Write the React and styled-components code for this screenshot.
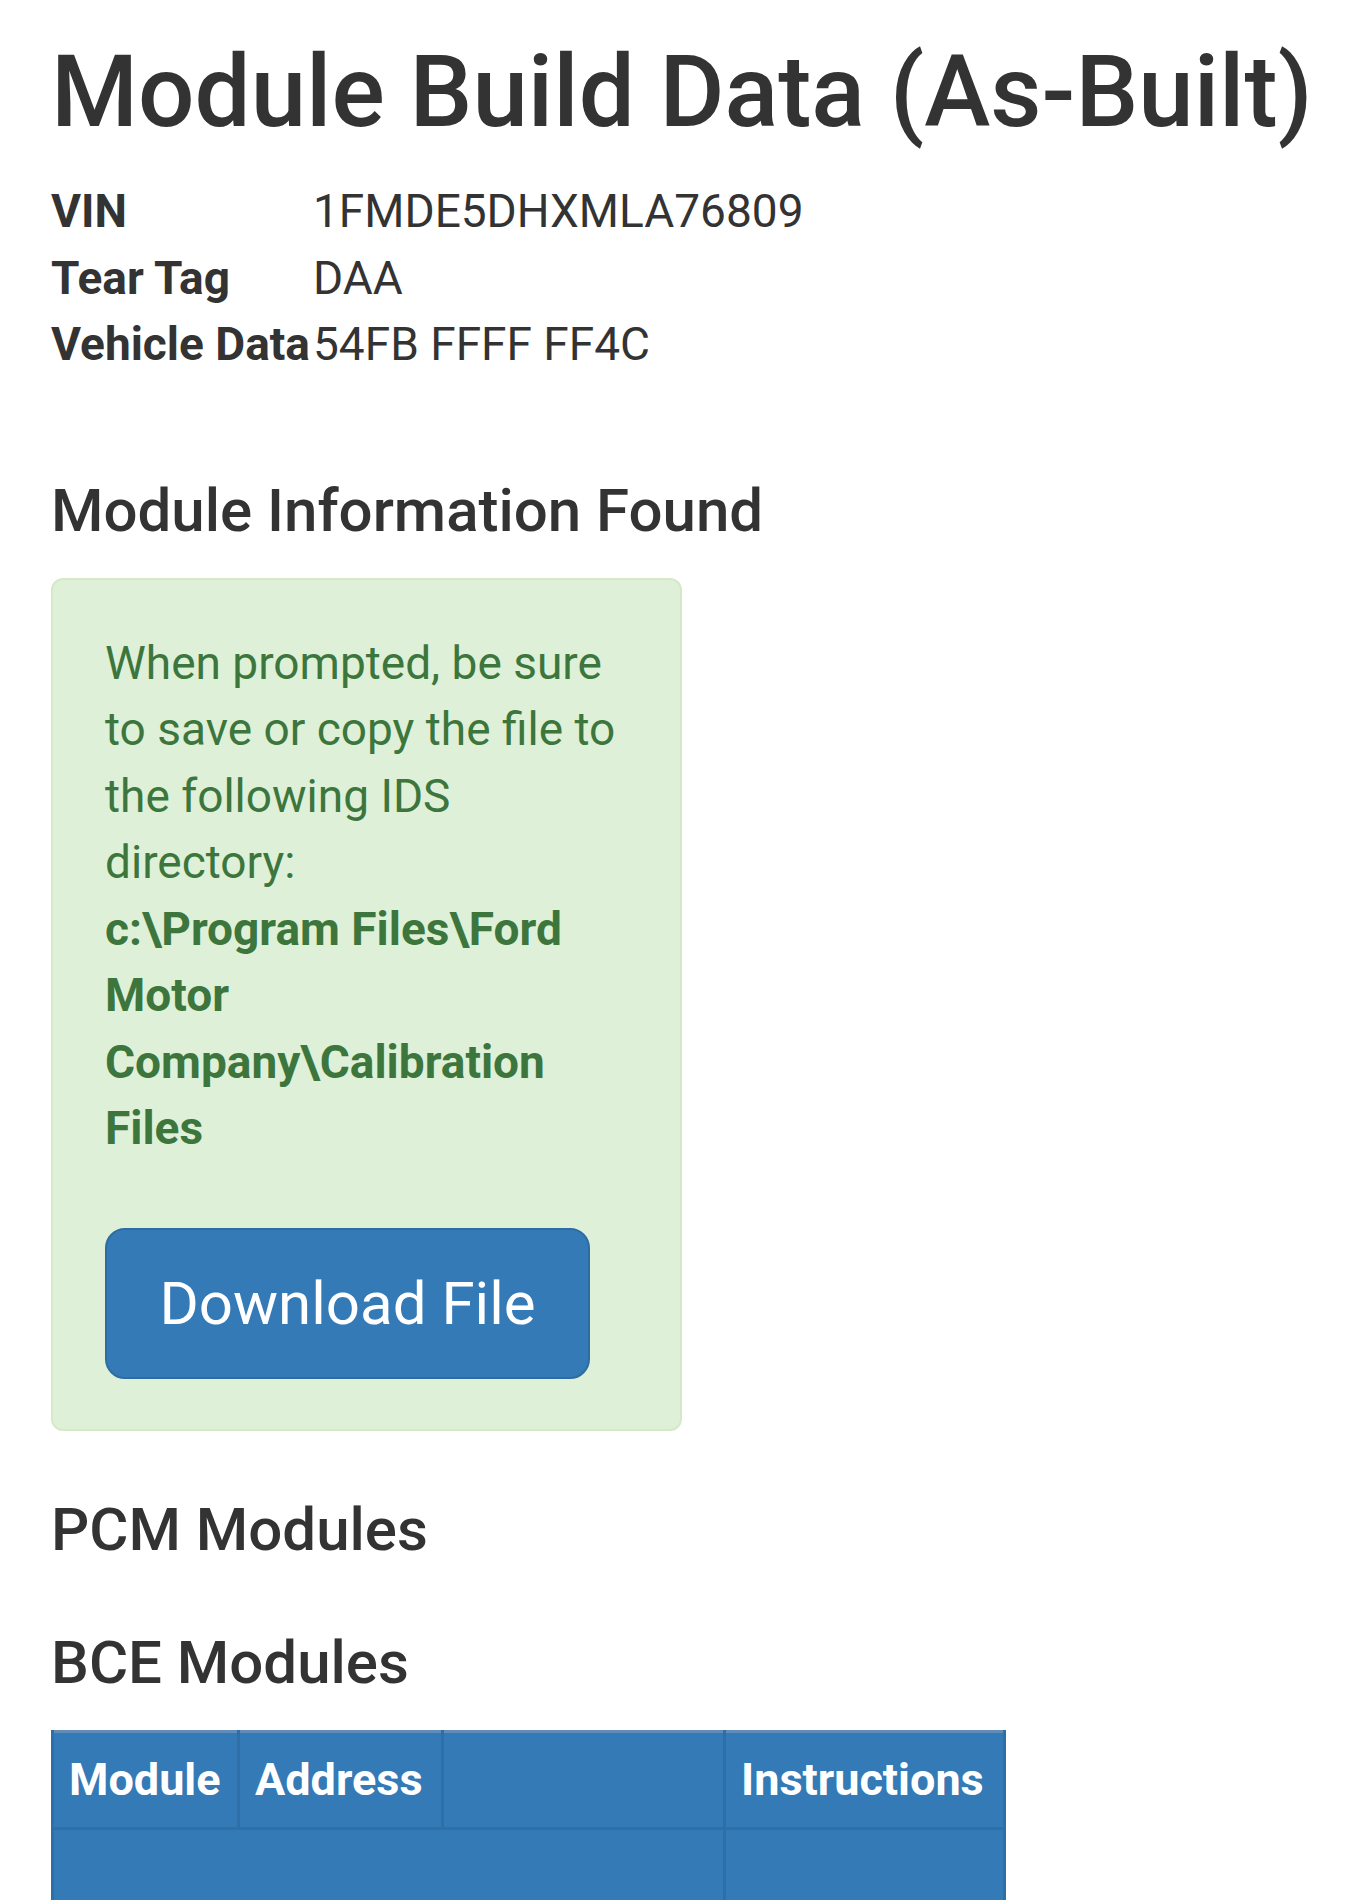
import React from "react";
import styled, { createGlobalStyle } from "styled-components";

const GlobalStyle = createGlobalStyle`
  html, body {
    margin: 0;
    padding: 0;
    background: #ffffff;
  }
  body {
    font-family: Roboto, "Noto Sans", "Liberation Sans", sans-serif;
    color: #333333;
    font-size: 46px;
    line-height: 66.5px;
  }
`;

const Page = styled.div`
  padding: 35px 51px 0 51px;
  width: 1364px;
  box-sizing: border-box;
`;

const Title = styled.h1`
  margin: 0;
  font-size: 99.6px;
  line-height: 114px;
  font-weight: 500;
  color: #333333;
  white-space: nowrap;
`;

const InfoList = styled.dl`
  display: grid;
  grid-template-columns: 262px 1fr;
  margin: 29px 0 0 0;
`;

const InfoLabel = styled.dt`
  font-weight: 700;
  white-space: nowrap;
`;

const InfoValue = styled.dd`
  margin: 0;
  white-space: nowrap;
`;

const SectionTitle = styled.h3`
  margin: ${(p) => p.$top}px 0 0 0;
  font-size: 60px;
  line-height: 66px;
  font-weight: 500;
  color: #333333;
`;

const Alert = styled.div`
  margin-top: 34px;
  width: 631px;
  box-sizing: border-box;
  padding: 50px 52px;
  background: #dff0d8;
  border: 2px solid #d6e9c6;
  border-radius: 12px;
  color: #3c763d;
`;

const AlertText = styled.p`
  margin: 0 0 66px 0;
`;

const Path = styled.strong`
  font-weight: 700;
`;

const DownloadButton = styled.button`
  display: block;
  width: 485px;
  height: 151px;
  box-sizing: border-box;
  padding: 0;
  background: #337ab7;
  border: 2px solid #2e6da4;
  border-radius: 20px;
  color: #ffffff;
  font-family: inherit;
  font-size: 60px;
  font-weight: 400;
  cursor: pointer;
`;

const Table = styled.table`
  margin-top: 34px;
  border-collapse: collapse;
  width: 952px;
  table-layout: fixed;
  background: #337ab7;
  color: #ffffff;
  border-top: 3px solid #5f8db8;
`;

const HeadCell = styled.th`
  width: ${(p) => p.$w}px;
  height: 97px;
  box-sizing: border-box;
  padding: 0 15px;
  text-align: left;
  font-size: 45px;
  font-weight: 700;
  line-height: 64px;
  border: 3px solid #2f6fa7;
  border-top: none;
  white-space: nowrap;
`;

const BodyCell = styled.td`
  height: 140px;
  padding: 0 15px;
  border: 3px solid #2f6fa7;
`;

const rows = [
  ["VIN", "1FMDE5DHXMLA76809"],
  ["Tear Tag", "DAA"],
  ["Vehicle Data", "54FB FFFF FF4C"],
];

const columns = [
  ["Module", 186],
  ["Address", 204],
  ["", 282],
  ["Instructions", 280],
];

const App = () => {
  return (
    <>
      <GlobalStyle />
      <Page>
        <Title>Module Build Data (As-Built)</Title>
        <InfoList>
          {rows.map(([label, value]) => (
            <React.Fragment key={label}>
              <InfoLabel>{label}</InfoLabel>
              <InfoValue>{value}</InfoValue>
            </React.Fragment>
          ))}
        </InfoList>

        <SectionTitle $top={100}>Module Information Found</SectionTitle>
        <Alert>
          <AlertText>
            When prompted, be sure to save or copy the file to the following
            IDS directory:
            <br />
            <Path>c:\Program Files\Ford Motor Company\Calibration Files</Path>
          </AlertText>
          <DownloadButton type="button">Download File</DownloadButton>
        </Alert>

        <SectionTitle $top={66}>PCM Modules</SectionTitle>
        <SectionTitle $top={67}>BCE Modules</SectionTitle>

        <Table>
          <thead>
            <tr>
              {columns.map(([name, w], i) => (
                <HeadCell key={i} $w={w}>
                  {name}
                </HeadCell>
              ))}
            </tr>
          </thead>
          <tbody>
            <tr>
              <BodyCell colSpan={3}></BodyCell>
              <BodyCell></BodyCell>
            </tr>
          </tbody>
        </Table>
      </Page>
    </>
  );
};

export default App;
